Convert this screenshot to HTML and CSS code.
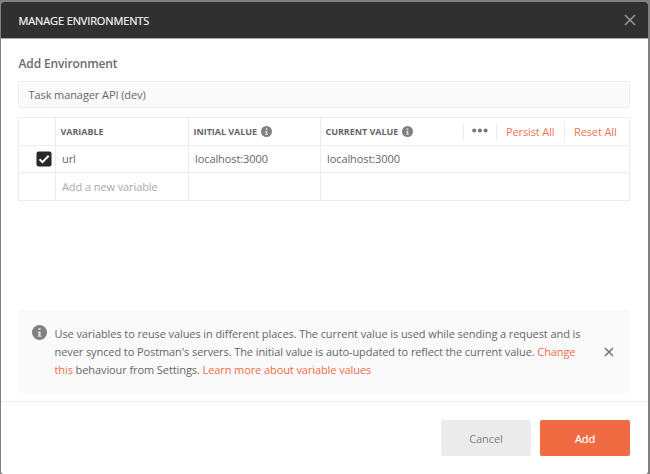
FILE: index.html
```
<!DOCTYPE html>
<html lang="en">
<head>
<meta charset="utf-8">
<title>Manage Environments</title>
<link rel="stylesheet" href="styles.css">
</head>
<body>
<svg width="0" height="0" class="defs">
  <symbol id="info" viewBox="0 0 14 14"><circle cx="7" cy="7" r="7" fill="#808080"/><path d="M6 3h2v1.7H6zM5.3 6H8v4h.8v1H5.3v-1H6V7h-.7z" fill="#dedede"/></symbol>
</svg>
<div class="modal">
  <header class="header">
    <h1 class="title">MANAGE ENVIRONMENTS</h1>
    <svg class="close" viewBox="0 0 12 12"><path d="M1 1l10 10M11 1L1 11"/></svg>
  </header>
  <main class="content">
    <h2 class="subtitle">Add Environment</h2>
    <div class="name">Task manager API (dev)</div>
    <div class="table">
      <div class="row head">
        <div class="cell"></div>
        <div class="cell">VARIABLE</div>
        <div class="cell">INITIAL VALUE<svg class="info"><use href="#info"/></svg></div>
        <div class="cell">CURRENT VALUE<svg class="info"><use href="#info"/></svg>
          <div class="actions">
            <span class="more"><svg width="16" height="5" viewBox="0 0 16 5"><circle cx="2.2" cy="2.5" r="2"/><circle cx="7.9" cy="2.5" r="2"/><circle cx="13.6" cy="2.5" r="2"/></svg></span>
            <span class="persist">Persist All</span>
            <span class="reset">Reset All</span>
          </div>
        </div>
      </div>
      <div class="row first">
        <div class="cell check"><svg class="checkbox" viewBox="0 0 16 16"><rect x=".5" y=".5" width="15" height="15" rx="2" fill="#282828"/><path d="M3.5 8.3l3 2.9 6.2-6.4" fill="none" stroke="#fff" stroke-width="2"/></svg></div>
        <div class="cell">url</div>
        <div class="cell">localhost:3000</div>
        <div class="cell">localhost:3000</div>
      </div>
      <div class="row">
        <div class="cell"></div>
        <div class="cell placeholder">Add a new variable</div>
        <div class="cell"></div>
        <div class="cell"></div>
      </div>
    </div>
    <div class="notice">
      <svg class="notice-icon"><use href="#info"/></svg>
      <p class="message">Use variables to reuse values in different places. The current value is used while sending a request and is<br>never synced to Postman's servers. The initial value is auto-updated to reflect the current value. <a>Change</a><br><a>this</a> behaviour from Settings. <a>Learn more about variable values</a></p>
      <svg class="dismiss" viewBox="0 0 10 10"><path d="M1 1l8 8M9 1L1 9"/></svg>
    </div>
  </main>
  <footer class="footer">
    <button class="btn cancel">Cancel</button>
    <button class="btn add">Add</button>
  </footer>
</div>
</body>
</html>
```
FILE: styles.css
```
* { box-sizing: border-box; }
body {
  margin: 0;
  height: 474px;
  overflow: hidden;
  background: #808080;
  padding: 2px 2px 0 1px;
  font-family: "Open Sans", sans-serif;
  font-size: 11px;
  letter-spacing: -0.09px;
  color: #666;
}
.defs { position: absolute; }
.modal {
  height: 472px;
  display: flex;
  flex-direction: column;
  background: #fff;
  border-radius: 3px;
  overflow: hidden;
}
.header {
  height: 36px;
  flex: none;
  display: flex;
  align-items: center;
  justify-content: space-between;
  padding: 0 12px 0 17.5px;
  background: #303030;
}
.title { margin: 1px 0 0; font-size: 11px; font-weight: 400; color: #f4f4f4; letter-spacing: -0.13px; -webkit-text-stroke: 0.2px #f4f4f4; }
.close { width: 12px; height: 12px; fill: none; stroke: #999; stroke-width: 1.5; }
.content { flex: 1; padding: 0 18px 0 17px; border-top: 1px solid #aaa; }
.subtitle { margin: 16px 0 0; padding-left: 0.5px; height: 18px; line-height: 18px; font-size: 12px; font-weight: 600; color: #6c6c6c; letter-spacing: -0.13px; }
.name {
  margin-top: 8px;
  height: 27px;
  line-height: 25px;
  padding-left: 9.5px;
  background: #fafafa;
  border: 1px solid #eee;
  border-radius: 2px;
}
.table { margin-top: 9px; border: 1px solid #ececec; }
.row { display: grid; grid-template-columns: 36px 133px 132px 1fr; height: 28px; }
.row + .row { border-top: 1px solid #ececec; }
.row.head { height: 27px; font-size: 9px; font-weight: 700; letter-spacing: -0.05px; }
.row.first { height: 27px; }
.cell { display: flex; align-items: center; padding: 0 0 1px 6px; white-space: nowrap; }
.cell + .cell { border-left: 1px solid #ececec; }
.head .cell { padding: 0 0 0 4.5px; }
.cell.check { padding: 0 0 1px 16.5px; }
.checkbox { width: 16px; height: 16px; }
.placeholder { color: #aaa; }
.info { width: 11px; height: 11px; margin: 0 0 1px 4px; }
.actions {
  display: flex;
  align-items: center;
  margin-left: auto;
  margin-right: 1px;
  font-size: 11px;
  font-weight: 400;
  letter-spacing: -0.12px;
  color: #ee7452;
}
.actions > span { height: 18px; display: flex; align-items: center; border-left: 1px solid #ececec; }
.actions > .more { width: 33px; padding: 0 0 3px 8px; fill: #777; }
.persist { width: 68px; padding-left: 9px; }
.reset { width: 64px; padding-left: 9px; }
.notice {
  margin-top: 109px;
  height: 83px;
  display: flex;
  padding: 15px 16px 0 14px;
  background: #fafafa;
}
.notice-icon { width: 15px; height: 15px; flex: none; }
.message { margin: 0 0 0 7.5px; width: 540px; line-height: 17.8px; white-space: nowrap; }
.message a { color: #ee6c47; }
.dismiss { width: 10px; height: 10px; margin: 22px 0 0 auto; flex: none; fill: none; stroke: #666; stroke-width: 1.3; }
.footer {
  height: 73px;
  flex: none;
  display: flex;
  justify-content: flex-end;
  gap: 9px;
  padding: 18px 18px 0 0;
  border-top: 1px solid #eee;
}
.btn {
  width: 90px;
  height: 36px;
  padding: 0;
  border: 0;
  border-radius: 2px;
  font: 11px "Open Sans", sans-serif;
  letter-spacing: -0.09px;
}
.cancel { background: #ebebeb; color: #808080; }
.add { background: #f06b42; color: #fff; -webkit-text-stroke: 0.2px #fff; }
```
